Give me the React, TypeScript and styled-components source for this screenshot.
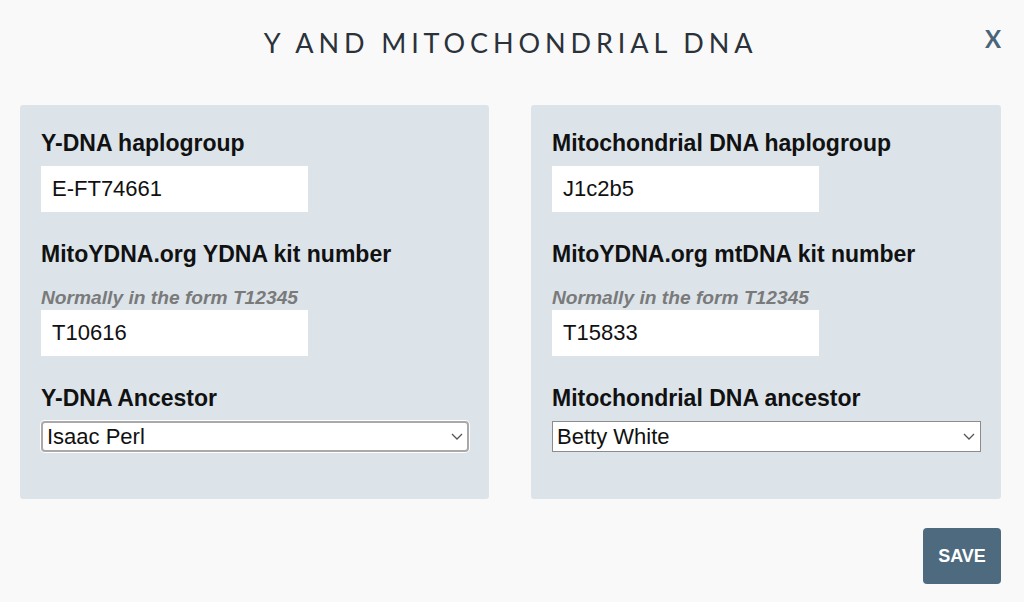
import styled, { createGlobalStyle } from "styled-components";

const GlobalStyle = createGlobalStyle`
  html, body {
    margin: 0;
    padding: 0;
    background: #f9f9f9;
  }
  body {
    font-family: "Liberation Sans", Arial, sans-serif;
    color: #111;
  }
  * {
    box-sizing: border-box;
  }
`;

const Page = styled.div`
  width: 1024px;
  height: 602px;
  padding: 0 23px 0 20px;
  background: #f9f9f9;
`;

const Header = styled.header`
  display: grid;
  grid-template-columns: 1fr auto 1fr;
  align-items: center;
  height: 84px;
  margin-bottom: 21px;
`;

const Title = styled.h1`
  grid-column: 2;
  margin: 0;
  font-family: Lato, "Open Sans", sans-serif;
  font-weight: 400;
  font-size: 27px;
  letter-spacing: 4.9px;
  color: #2b323a;
  white-space: nowrap;
`;

const Close = styled.button`
  grid-column: 3;
  justify-self: end;
  margin-top: -6px;
  padding: 0;
  border: none;
  background: none;
  font-family: Lato, sans-serif;
  font-weight: 700;
  font-size: 24px;
  line-height: 1;
  color: #4a6579;
  cursor: pointer;
`;

const Columns = styled.div`
  display: grid;
  grid-template-columns: 469px 470px;
  column-gap: 42px;
`;

const Panel = styled.section`
  display: flex;
  flex-direction: column;
  gap: 29px;
  padding: 25px 20px 47px 21px;
  background: #dce4ea;
  border-radius: 3px;
`;

const Field = styled.div`
  display: flex;
  flex-direction: column;
  align-items: flex-start;
`;

const Label = styled.label`
  margin: 0 0 10px;
  font-size: 23px;
  line-height: 26px;
  font-weight: 700;
  color: #111;
`;

const Hint = styled.div`
  margin: 10px 0 1px;
  font-size: 19.2px;
  line-height: 22px;
  font-weight: 700;
  font-style: italic;
  color: #7a7a7a;
`;

const TextInput = styled.input`
  width: 267px;
  height: 46px;
  padding: 0 11px;
  border: none;
  background: #fff;
  font-family: "Liberation Sans", Arial, sans-serif;
  font-size: 22px;
  color: #111;
  outline: none;
`;

const SelectWrap = styled.div`
  position: relative;
  width: 100%;
`;

const Select = styled.select<{ $focused?: boolean }>`
  appearance: none;
  display: block;
  width: 100%;
  height: 31px;
  padding: 0 24px 0 4px;
  font-family: "Liberation Sans", Arial, sans-serif;
  font-size: 22px;
  color: #111;
  background: #fff;
  border: ${(p) => (p.$focused ? "2px solid #a9a9a9" : "1px solid #8c8c8c")};
  border-radius: ${(p) => (p.$focused ? "4px" : "0")};
  box-shadow: ${(p) => (p.$focused ? "0 0 0 1px #fff" : "none")};
  outline: none;
`;

const Chevron = styled.svg`
  position: absolute;
  right: 6px;
  top: 12px;
  pointer-events: none;
`;

const Footer = styled.div`
  display: flex;
  justify-content: flex-end;
  margin-top: 29px;
`;

const SaveButton = styled.button`
  width: 78px;
  height: 56px;
  border: none;
  border-radius: 4px;
  background: #4d6a7f;
  color: #fff;
  font-family: "Liberation Sans", Arial, sans-serif;
  font-size: 18px;
  font-weight: 700;
  cursor: pointer;
`;

type SelectProps = { value: string; focused?: boolean };

function AncestorSelect({ value, focused }: SelectProps) {
  return (
    <SelectWrap>
      <Select $focused={focused} defaultValue={value}>
        <option>{value}</option>
      </Select>
      <Chevron width="12" height="7" viewBox="0 0 12 7">
        <path d="M1 1 L6 6 L11 1" fill="none" stroke="#555" strokeWidth="1.3" />
      </Chevron>
    </SelectWrap>
  );
}

type PanelData = {
  groupLabel: string;
  group: string;
  kitLabel: string;
  kit: string;
  ancestorLabel: string;
  ancestor: string;
  focused?: boolean;
};

const panels: PanelData[] = [
  {
    groupLabel: "Y-DNA haplogroup",
    group: "E-FT74661",
    kitLabel: "MitoYDNA.org YDNA kit number",
    kit: "T10616",
    ancestorLabel: "Y-DNA Ancestor",
    ancestor: "Isaac Perl",
    focused: true,
  },
  {
    groupLabel: "Mitochondrial DNA haplogroup",
    group: "J1c2b5",
    kitLabel: "MitoYDNA.org mtDNA kit number",
    kit: "T15833",
    ancestorLabel: "Mitochondrial DNA ancestor",
    ancestor: "Betty White",
  },
];

export default function App() {
  return (
    <>
      <GlobalStyle />
      <Page>
        <Header>
          <Title>Y AND MITOCHONDRIAL DNA</Title>
          <Close aria-label="Close">X</Close>
        </Header>
        <Columns>
          {panels.map((p) => (
            <Panel key={p.groupLabel}>
              <Field>
                <Label>{p.groupLabel}</Label>
                <TextInput defaultValue={p.group} />
              </Field>
              <Field>
                <Label>{p.kitLabel}</Label>
                <Hint>Normally in the form T12345</Hint>
                <TextInput defaultValue={p.kit} />
              </Field>
              <Field>
                <Label>{p.ancestorLabel}</Label>
                <AncestorSelect value={p.ancestor} focused={p.focused} />
              </Field>
            </Panel>
          ))}
        </Columns>
        <Footer>
          <SaveButton>SAVE</SaveButton>
        </Footer>
      </Page>
    </>
  );
}
